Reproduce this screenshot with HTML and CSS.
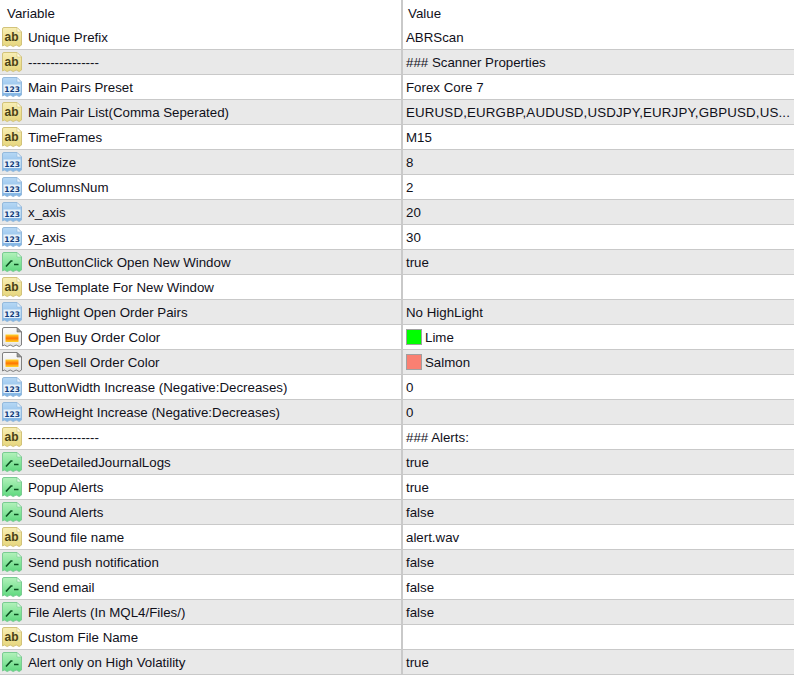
FILE: index.html
```html
<!DOCTYPE html>
<html lang="en">
<head>
<meta charset="utf-8">
<title>Inputs</title>
<link rel="stylesheet" href="styles.css">
</head>
<body>
<svg class="defs" width="0" height="0" aria-hidden="true">
<defs>
<linearGradient id="gy" x1="0" y1="0" x2="0" y2="1"><stop offset="0" stop-color="#f8eeb4"/><stop offset="1" stop-color="#e6d67c"/></linearGradient>
<linearGradient id="gb" x1="0" y1="0" x2="0" y2="1"><stop offset="0" stop-color="#b6d8f5"/><stop offset="1" stop-color="#7db2e4"/></linearGradient>
<linearGradient id="gg" x1="0" y1="0" x2="0" y2="1"><stop offset="0" stop-color="#b2f2bb"/><stop offset="1" stop-color="#5fd97f"/></linearGradient>
<linearGradient id="gw" x1="0" y1="0" x2="0" y2="1"><stop offset="0" stop-color="#fbfbfb"/><stop offset="1" stop-color="#e2e2e2"/></linearGradient>
<linearGradient id="gc" x1="0" y1="0" x2="0" y2="1"><stop offset="0" stop-color="#ffd62a"/><stop offset=".5" stop-color="#ff7400"/><stop offset="1" stop-color="#ffd62a"/></linearGradient>
<path id="sheet" d="M1.5 3Q1.5 1.5 3 1.5H16L20.5 6V19L18.2 20.5L15.2 19L12.2 20.5L9.2 19L6.2 20.5L3.4 19L1.5 20Z"/>
<path id="fold" d="M16 1.5V6H20.5Z"/>
<g id="i-ab">
<use href="#sheet" fill="url(#gy)" stroke="#d2c37a"/>
<use href="#fold" fill="#fffbe6" stroke="#d2c37a" stroke-width=".6"/>
<text x="3.5" y="15" class="ico-ab">ab</text>
</g>
<g id="i-num">
<use href="#sheet" fill="url(#gb)" stroke="#93b9dc"/>
<use href="#fold" fill="#eaf4fd" stroke="#93b9dc" stroke-width=".6"/>
<rect x="2.5" y="8.5" width="17" height="8.5" fill="#e6f1fa"/>
<text x="3.2" y="16" class="ico-num">123</text>
</g>
<g id="i-bool">
<use href="#sheet" fill="url(#gg)" stroke="#7acb92"/>
<use href="#fold" fill="#e2fae7" stroke="#7acb92" stroke-width=".6"/>
<path d="M5 15.5L10 10H11.5M13 13.5H17.5" fill="none" stroke="#0c4f20" stroke-width="1.7"/>
</g>
<g id="i-col">
<use href="#sheet" fill="url(#gw)" stroke="#808080"/>
<use href="#fold" fill="#999" stroke="#666" stroke-width=".6"/>
<rect x="3.5" y="7.5" width="15" height="9" fill="#f3f3f3"/>
<rect x="4.5" y="8.5" width="13" height="7.5" fill="url(#gc)"/>
</g>
</defs>
</svg>
<div class="table">
<div class="row head"><div class="name">Variable</div><div class="value">Value</div></div>
<div class="row"><div class="name"><svg class="icon"><use href="#i-ab"/></svg>Unique Prefix</div><div class="value">ABRScan</div></div>
<div class="row alt"><div class="name"><svg class="icon"><use href="#i-ab"/></svg>----------------</div><div class="value">### Scanner Properties</div></div>
<div class="row"><div class="name"><svg class="icon"><use href="#i-num"/></svg>Main Pairs Preset</div><div class="value">Forex Core 7</div></div>
<div class="row alt"><div class="name"><svg class="icon"><use href="#i-ab"/></svg>Main Pair List(Comma Seperated)</div><div class="value wide">EURUSD,EURGBP,AUDUSD,USDJPY,EURJPY,GBPUSD,US...</div></div>
<div class="row"><div class="name"><svg class="icon"><use href="#i-ab"/></svg>TimeFrames</div><div class="value">M15</div></div>
<div class="row alt"><div class="name"><svg class="icon"><use href="#i-num"/></svg>fontSize</div><div class="value">8</div></div>
<div class="row"><div class="name"><svg class="icon"><use href="#i-num"/></svg>ColumnsNum</div><div class="value">2</div></div>
<div class="row alt"><div class="name"><svg class="icon"><use href="#i-num"/></svg>x_axis</div><div class="value">20</div></div>
<div class="row"><div class="name"><svg class="icon"><use href="#i-num"/></svg>y_axis</div><div class="value">30</div></div>
<div class="row alt"><div class="name"><svg class="icon"><use href="#i-bool"/></svg>OnButtonClick Open New Window</div><div class="value">true</div></div>
<div class="row"><div class="name"><svg class="icon"><use href="#i-ab"/></svg>Use Template For New Window</div><div class="value"></div></div>
<div class="row alt"><div class="name"><svg class="icon"><use href="#i-num"/></svg>Highlight Open Order Pairs</div><div class="value">No HighLight</div></div>
<div class="row"><div class="name"><svg class="icon"><use href="#i-col"/></svg>Open Buy Order Color</div><div class="value"><span class="swatch lime"></span>Lime</div></div>
<div class="row alt"><div class="name"><svg class="icon"><use href="#i-col"/></svg>Open Sell Order Color</div><div class="value"><span class="swatch salmon"></span>Salmon</div></div>
<div class="row"><div class="name"><svg class="icon"><use href="#i-num"/></svg>ButtonWidth Increase (Negative:Decreases)</div><div class="value">0</div></div>
<div class="row alt"><div class="name"><svg class="icon"><use href="#i-num"/></svg>RowHeight Increase (Negative:Decreases)</div><div class="value">0</div></div>
<div class="row"><div class="name"><svg class="icon"><use href="#i-ab"/></svg>----------------</div><div class="value">### Alerts:</div></div>
<div class="row alt"><div class="name"><svg class="icon"><use href="#i-bool"/></svg>seeDetailedJournalLogs</div><div class="value">true</div></div>
<div class="row"><div class="name"><svg class="icon"><use href="#i-bool"/></svg>Popup Alerts</div><div class="value">true</div></div>
<div class="row alt"><div class="name"><svg class="icon"><use href="#i-bool"/></svg>Sound Alerts</div><div class="value">false</div></div>
<div class="row"><div class="name"><svg class="icon"><use href="#i-ab"/></svg>Sound file name</div><div class="value">alert.wav</div></div>
<div class="row alt"><div class="name"><svg class="icon"><use href="#i-bool"/></svg>Send push notification</div><div class="value">false</div></div>
<div class="row"><div class="name"><svg class="icon"><use href="#i-bool"/></svg>Send email</div><div class="value">false</div></div>
<div class="row alt"><div class="name"><svg class="icon"><use href="#i-bool"/></svg>File Alerts (In MQL4/Files/)</div><div class="value">false</div></div>
<div class="row"><div class="name"><svg class="icon"><use href="#i-ab"/></svg>Custom File Name</div><div class="value"></div></div>
<div class="row alt"><div class="name"><svg class="icon"><use href="#i-bool"/></svg>Alert only on High Volatility</div><div class="value">true</div></div>
</div>
</body>
</html>
```
FILE: styles.css
```css
html, body {
  margin: 0;
  padding: 0;
  background: #fff;
}
body {
  width: 794px;
  height: 676px;
  overflow: hidden;
  font-family: "Liberation Sans", Arial, sans-serif;
  font-size: 13.3px;
  color: #10101a;
}
.defs {
  position: absolute;
}
.table {
  display: flex;
  flex-direction: column;
}
.row {
  display: grid;
  grid-template-columns: 403px 391px;
  height: 25px;
  box-sizing: border-box;
  border-bottom: 1px solid #c9c9c9;
}
.row.alt {
  background: #e9e9e9;
}
.row.head {
  border-bottom: 0;
}
.name, .value {
  display: flex;
  align-items: center;
  white-space: nowrap;
  overflow: hidden;
}
.name {
  padding-left: 1px;
  border-right: 2px solid #c9c9c9;
  box-sizing: border-box;
}
.value {
  padding-left: 3px;
}
.wide {
  letter-spacing: 0.17px;
}
.head .name {
  padding-left: 7px;
  padding-top: 1px;
}
.head .value {
  padding-left: 5px;
  padding-top: 1px;
}
.icon {
  width: 22px;
  height: 22px;
  margin-right: 5px;
  flex: none;
}
.ico-ab {
  font: bold 12px "Liberation Sans", Arial, sans-serif;
  fill: #4a4216;
}
.ico-num {
  font: bold 7.6px "DejaVu Sans", sans-serif;
  fill: #123a78;
}
.swatch {
  width: 16px;
  height: 16px;
  box-sizing: border-box;
  border: 1px solid #a0a0a0;
  margin-right: 3px;
  flex: none;
}
.lime { background: #00ff00; }
.salmon { background: #fa8072; }
```
